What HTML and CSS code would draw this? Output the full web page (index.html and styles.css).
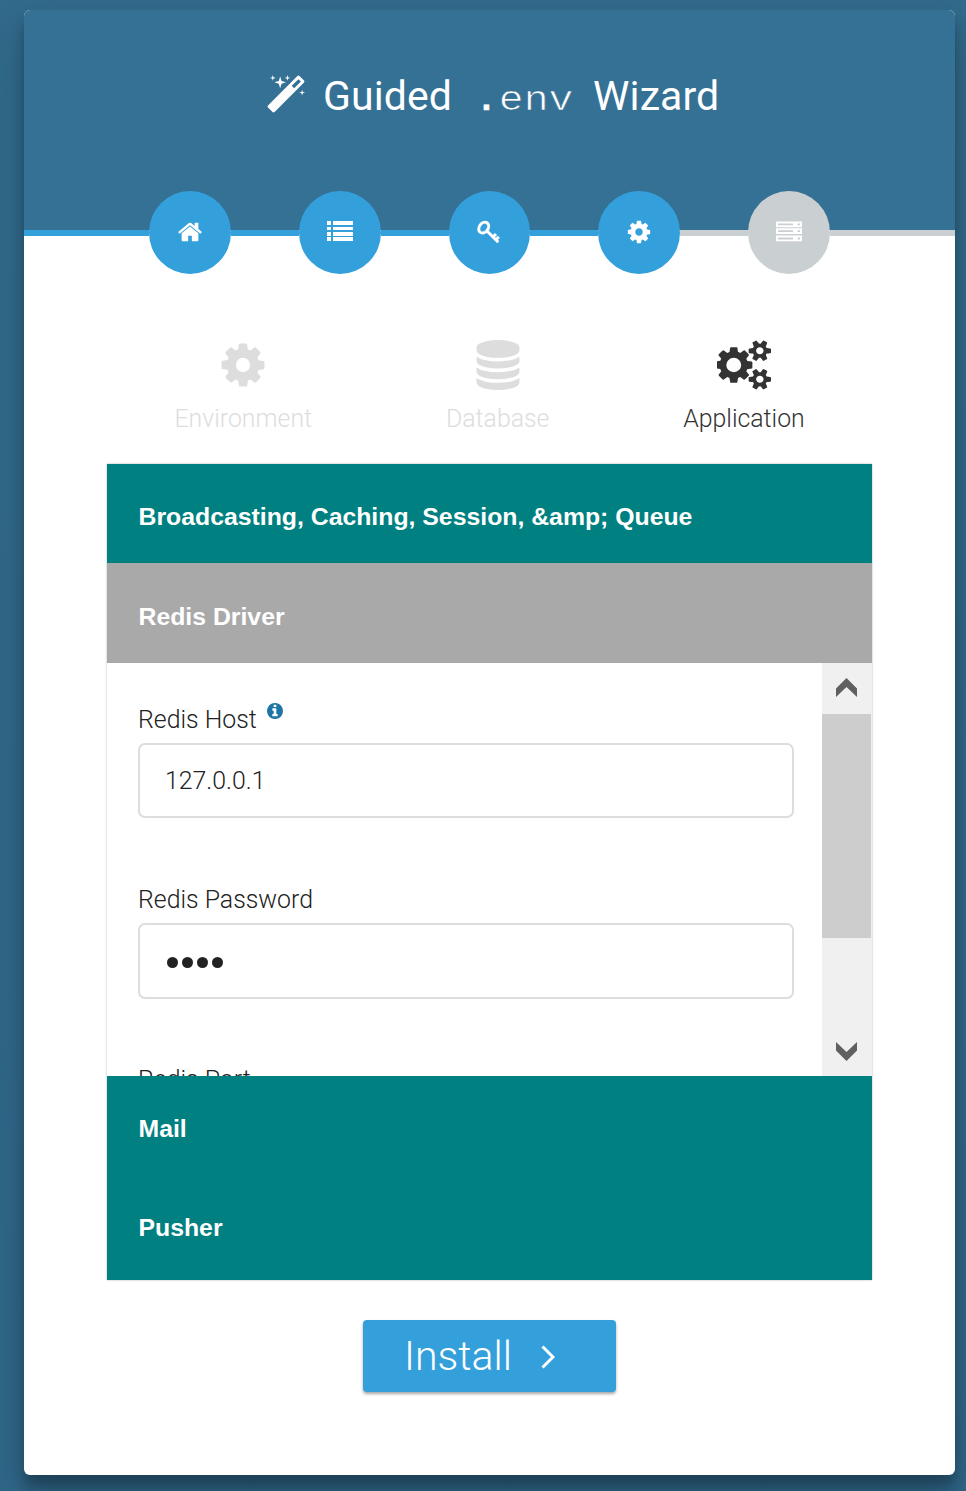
FILE: index.html
```html
<!DOCTYPE html>
<html lang="en">
<head>
<meta charset="utf-8">
<title>Guided .env Wizard</title>
<link rel="stylesheet" href="styles.css">
</head>
<body>
<main class="card">
  <header class="header">
    <h1 class="title">
      <svg class="wand" viewBox="0 0 1792 1792"><path d="M1254 581l293-293-107-107-293 293zm447-293q0 27-18 45l-1286 1286q-18 18-45 18t-45-18l-198-198q-18-18-18-45t18-45l1286-1286q18-18 45-18t45 18l198 198q18 18 18 45zm-1351-190l98 30-98 30-30 98-30-98-98-30 98-30 30-98zm350 162l196 60-196 60-60 196-60-196-196-60 196-60 60-196zm930 478l98 30-98 30-30 98-30-98-98-30 98-30 30-98zm-640-640l98 30-98 30-30 98-30-98-98-30 98-30 30-98z"/></svg>
      <span class="word">Guided</span><code class="env"><span class="dot">.</span>env</code><span class="word">Wizard</span>
    </h1>
  </header>
  <nav class="steps">
    <span class="line"></span>
    <span class="step"><svg class="ico" viewBox="0 0 1792 1792"><path d="M1472 992v480q0 26-19 45t-45 19h-384v-384h-256v384h-384q-26 0-45-19t-19-45v-480q0-1 .5-3t.5-3l575-474 575 474q1 2 1 6zm223-69l-62 74q-8 9-21 11h-3q-13 0-21-7l-692-577-692 577q-12 8-24 7-13-2-21-11l-62-74q-8-10-7-23.5t11-21.5l719-599q32-26 76-26t76 26l244 204v-195q0-14 9-23t23-9h192q14 0 23 9t9 23v408l219 182q10 8 11 21.5t-7 23.5z"/></svg></span>
    <span class="line"></span>
    <span class="step"><svg class="ico crisp" viewBox="0 0 26 26"><path d="M0 2h4v4H0zM6 2h20v4H6zM0 8h4v3H0zM6 8h20v3H6zM0 13h4v4H0zM6 13h20v4H6zM0 18h4v4H0zM6 18h20v4H6z"/></svg></span>
    <span class="line"></span>
    <span class="step"><svg class="ico" viewBox="0 0 26 26"><g fill="none" stroke="#fff"><ellipse cx="7.7" cy="8.6" rx="4.4" ry="5.8" transform="rotate(38 7.7 8.600)" stroke-width="3"/><path d="M10.500 11.500L22.300 23.300M17.200 17.800L20 15M20 20.600L22.800 17.800" stroke-width="3"/></g></svg></span>
    <span class="line"></span>
    <span class="step"><svg class="ico" viewBox="0 0 1792 1792"><path id="cog" d="M1152 896q0-106-75-181t-181-75-181 75-75 181 75 181 181 75 181-75 75-181zm512-109v222q0 12-8 23t-20 13l-185 28q-19 54-39 91 35 50 107 138 10 12 10 25t-9 23q-27 37-99 108t-94 71q-12 0-26-9l-138-108q-44 23-91 38-16 136-29 186-7 28-36 28h-222q-14 0-24.5-8.5t-11.5-21.5l-28-184q-49-16-90-37l-141 107q-10 9-25 9-14 0-25-11-126-114-165-168-7-10-7-23 0-12 8-23 15-21 51-66.5t54-70.5q-27-50-41-99l-183-27q-13-2-21-12.5t-8-23.5v-222q0-12 8-23t19-13l186-28q14-46 39-92-40-57-107-138-10-12-10-24 0-10 9-23 26-36 98.5-107.5t94.5-71.5q13 0 26 10l138 107q44-23 91-38 16-136 29-186 7-28 36-28h222q14 0 24.5 8.5t11.5 21.5l28 184q49 16 90 37l142-107q9-9 24-9 13 0 25 10 129 119 165 170 7 8 7 22 0 12-8 23-15 21-51 66.5t-54 70.5q26 50 41 98l183 28q13 2 21 12.5t8 23.5z"/></svg></span>
    <span class="line todo"></span>
    <span class="step todo"><svg class="ico" viewBox="0 0 26 26"><path fill-rule="evenodd" d="M0 2.500h26v5.700H0zM2 4.500v1.800h15V4.500zM21.500 4.500v1.800H24V4.500zM0 9.300h26v5.700H0zM2 11.300v1.800h15v-1.800zM21.500 11.300v1.800H24v-1.800zM0 16.600h26v5.700H0zM2 18.600v1.800h15v-1.800zM21.500 18.600v1.800H24v-1.800z"/></svg></span>
    <span class="line todo"></span>
  </nav>
  <section class="body">
    <div class="tabs">
      <div class="tab"><svg class="tab-ico" viewBox="0 0 1792 1792"><use href="#cog"/></svg><span>Environment</span></div>
      <div class="tab"><svg class="tab-ico" viewBox="0 0 1792 1792"><path d="M896 768q237 0 443-43t325-127v170q0 69-103 128t-280 93.5-385 34.5-385-34.5-280-93.5-103-128v-170q119 84 325 127t443 43zm0 768q237 0 443-43t325-127v170q0 69-103 128t-280 93.5-385 34.5-385-34.5-280-93.5-103-128v-170q119 84 325 127t443 43zm0-384q237 0 443-43t325-127v170q0 69-103 128t-280 93.5-385 34.5-385-34.5-280-93.5-103-128v-170q119 84 325 127t443 43zm0-1152q208 0 385 34.5t280 93.5 103 128v128q0 69-103 128t-280 93.5-385 34.5-385-34.5-280-93.5-103-128v-128q0-69 103-128t280-93.5 385-34.5z"/></svg><span>Database</span></div>
      <div class="tab active"><svg class="tab-ico wide" viewBox="0 0 1856 1792" preserveAspectRatio="none"><path d="M832 896q0-106-75-181t-181-75-181 75-75 181 75 181 181 75 181-75 75-181zm768 512q0-52-38-90t-90-38-90 38-38 90q0 53 37.5 90.5t90.5 37.5 90.5-37.5 37.5-90.5zm0-1024q0-52-38-90t-90-38-90 38-38 90q0 53 37.5 90.5t90.5 37.5 90.5-37.5 37.5-90.5zm-384 421v185q0 10-7 19.5t-16 10.5l-155 24q-11 35-32 76 34 48 90 115 7 11 7 20 0 12-7 19-23 30-82.5 89.5t-78.5 59.5q-11 0-21-7l-115-90q-37 19-77 31-11 108-23 155-7 24-30 24h-186q-11 0-20-7.5t-10-17.5l-23-153q-34-10-75-31l-118 89q-7 7-20 7-11 0-21-8-144-133-144-160 0-9 7-19 10-14 41-53t47-61q-23-44-35-82l-152-24q-10-1-17-9.5t-7-19.5v-185q0-10 7-19.5t16-10.5l155-24q11-35 32-76-34-48-90-115-7-11-7-20 0-12 7-20 22-30 82-89t79-59q11 0 21 7l115 90q34-18 77-32 11-108 23-154 7-24 30-24h186q11 0 20 7.5t10 17.5l23 153q34 10 75 31l118-89q8-7 20-7 11 0 21 8 144 133 144 160 0 8-7 19-12 16-42 54t-45 60q23 48 34 82l152 23q10 2 17 10.5t7 19.5zm640 533v140q0 16-149 31-12 27-30 52 51 113 51 138 0 4-4 7-122 71-124 71-8 0-46-47t-52-68q-20 2-30 2t-30-2q-14 21-52 68t-46 47q-2 0-124-71-4-3-4-7 0-25 51-138-18-25-30-52-149-15-149-31v-140q0-16 149-31 13-29 30-52-51-113-51-138 0-4 4-7 4-2 35-20t59-34 30-16q8 0 46 46.5t52 67.5q20-2 30-2t30 2q51-71 92-112l6-2q4 0 124 70 4 3 4 7 0 25-51 138 17 23 30 52 149 15 149 31zm0-1024v140q0 16-149 31-12 27-30 52 51 113 51 138 0 4-4 7-122 71-124 71-8 0-46-47t-52-68q-20 2-30 2t-30-2q-14 21-52 68t-46 47q-2 0-124-71-4-3-4-7 0-25 51-138-18-25-30-52-149-15-149-31v-140q0-16 149-31 13-29 30-52-51-113-51-138 0-4 4-7 4-2 35-20t59-34 30-16q8 0 46 46.5t52 67.5q20-2 30-2t30 2q51-71 92-112l6-2q4 0 124 70 4 3 4 7 0 25-51 138 17 23 30 52 149 15 149 31z"/></svg><span>Application</span></div>
    </div>
    <div class="accordion">
      <h2 class="bar first">Broadcasting, Caching, Session, &amp;amp; Queue</h2>
      <h2 class="bar open">Redis Driver</h2>
      <div class="panel">
        <div class="fields">
          <div class="field">
            <label class="label">Redis Host <svg class="info" viewBox="128 128 1536 1536"><path d="M1152 1376v-160q0-14-9-23t-23-9h-96v-512q0-14-9-23t-23-9h-320q-14 0-23 9t-9 23v160q0 14 9 23t23 9h96v320h-96q-14 0-23 9t-9 23v160q0 14 9 23t23 9h448q14 0 23-9t9-23zm-128-896v-160q0-14-9-23t-23-9h-192q-14 0-23 9t-9 23v160q0 14 9 23t23 9h192q14 0 23-9t9-23zm640 416q0 209-103 385.5t-279.5 279.5-385.5 103-385.5-103-279.5-279.5-103-385.5 103-385.5 279.5-279.5 385.5-103 385.5 103 279.5 279.5 103 385.5z"/></svg></label>
            <div class="input">127.0.0.1</div>
          </div>
          <div class="field">
            <label class="label">Redis Password</label>
            <div class="input dots"><i></i><i></i><i></i><i></i></div>
          </div>
          <div class="field"><label class="label">Redis Port</label></div>
        </div>
        <div class="scroll">
          <svg class="arrow" viewBox="0 0 21 19"><path d="M0 10.500L10.500 0 21 10.500V19L10.500 9 0 19z"/></svg>
          <span class="thumb"></span>
          <svg class="arrow down" viewBox="0 0 21 19"><path d="M0 0l10.500 10L21 0v8.500L10.500 19 0 8.500z"/></svg>
        </div>
      </div>
      <h2 class="bar mail">Mail</h2>
      <h2 class="bar last">Pusher</h2>
    </div>
    <div class="actions">
      <button class="install"><span>Install</span><svg class="chev" viewBox="0 0 14 24"><path d="M1.500 1.500L12 12 1.500 22.500"/></svg></button>
    </div>
  </section>
</main>
</body>
</html>
```
FILE: styles.css
```css
* { box-sizing: border-box; }
body {
  margin: 0;
  padding: 10px 11px 16px 24px;
  height: 1491px;
  overflow: hidden;
  background: linear-gradient(#316a8b, #2f6688);
  font-family: Roboto, sans-serif;
  font-weight: 300;
  color: #222;
}
.card {
  height: 1465px;
  background: #fff;
  border-radius: 6px;
  box-shadow: 0 20px 40px rgba(0,0,0,.19), 0 12px 12px rgba(0,0,0,.23);
}
.header {
  height: 220px;
  padding: 56px 0 0 241px;
  background: #357195;
  border-radius: 6px 6px 0 0;
}
.title {
  display: flex;
  align-items: baseline;
  height: 60px;
  margin: 0;
  font-size: 41px;
  font-weight: 400;
  line-height: 60px;
  color: #fff;
}
.word { letter-spacing: .1px; }
.wand { width: 42px; height: 41px; margin: 9px 16px 0 0; fill: #fff; align-self: flex-start; }
.env {
  width: 100px;
  margin: 0 19px 0 22px;
  font: 400 34.500px "Liberation Mono", monospace;
  transform: scaleX(1.2);
  transform-origin: left;
  -webkit-text-stroke: .7px #357195;
}
.dot { -webkit-text-stroke: .6px #fff; }
.steps {
  display: flex;
  align-items: center;
  height: 83px;
  margin-top: -39px;
}
.line { flex: 0 0 68px; height: 6px; background: #34a0db; }
.line:first-child { flex-basis: 125px; }
.line:last-child { flex: 1; }
.step {
  flex: 0 0 81.800px;
  height: 83px;
  display: flex;
  align-items: center;
  justify-content: center;
  padding-bottom: 2px;
  border-radius: 50%;
  background: #34a0db;
}
.todo { background: #cacfd2; }
.ico { width: 26px; height: 26px; fill: #fff; }
.crisp { shape-rendering: crispEdges; }
.body { padding: 66px 83px 0; }
.tabs { display: flex; padding: 0 9px; }
.tab {
  flex: 0 0 254.500px;
  display: flex;
  flex-direction: column;
  align-items: center;
  font-size: 24.850px;
  line-height: 30px;
  color: #ddd;
  fill: #ddd;
}
.tab.active { color: #333; fill: #333; flex-basis: 238px; }
.tab-ico { width: 50px; height: 50px; margin-bottom: 14px; }
.tab-ico.wide { width: 54px; }
.accordion { margin-top: 30px; box-shadow: 0 0 2px rgba(0,0,0,.3); }
.bar {
  margin: 0;
  height: 99px;
  padding: 38px 31.500px 0;
  font: 700 24.800px/30px "Liberation Sans", Arial, sans-serif;
  color: #fff;
  background: teal;
}
.bar.open { height: 100px; padding-top: 39px; background: #a9a9a9; }
.bar.last { height: 105px; }
.panel { display: flex; height: 413px; overflow: hidden; background: #fff; }
.fields { flex: 1; padding: 40px 28px 0 31px; }
.field { height: 180px; }
.label { display: flex; height: 40px; font-size: 24.850px; line-height: 33px; }
.info { width: 16px; height: 16px; margin-left: 10px; fill: #1d76a6; }
.input {
  height: 75px;
  padding: 0 25px;
  border: 2px solid #ddd;
  border-radius: 7px;
  font-size: 24.850px;
  line-height: 71px;
}
.dots { display: flex; align-items: center; gap: 4px; height: 76px; padding: 3px 27px 0; }
.dots i { width: 11px; height: 11px; border-radius: 50%; background: #222; }
.scroll {
  width: 50px;
  display: flex;
  flex-direction: column;
  padding: 15px 1px 15px 0;
  background: #f0f0f0;
}
.arrow { width: 21px; height: 19px; margin-left: 14px; fill: #606060; }
.thumb { height: 224px; margin-top: 17px; background: #cdcdcd; }
.arrow.down { margin-top: auto; }
.actions { display: flex; justify-content: center; padding-top: 40px; }
.install {
  display: flex;
  align-items: center;
  width: 253px;
  height: 72px;
  padding: 0 0 0 41px;
  border: 0;
  border-radius: 4px;
  background: #34a0db;
  box-shadow: 0 2px 3px rgba(0,0,0,.35);
  font: 300 41px Roboto, sans-serif;
  color: #fff;
}
.chev { width: 14px; height: 24px; margin: 2px 0 0 29px; fill: none; stroke: #fff; stroke-width: 3; }
```
